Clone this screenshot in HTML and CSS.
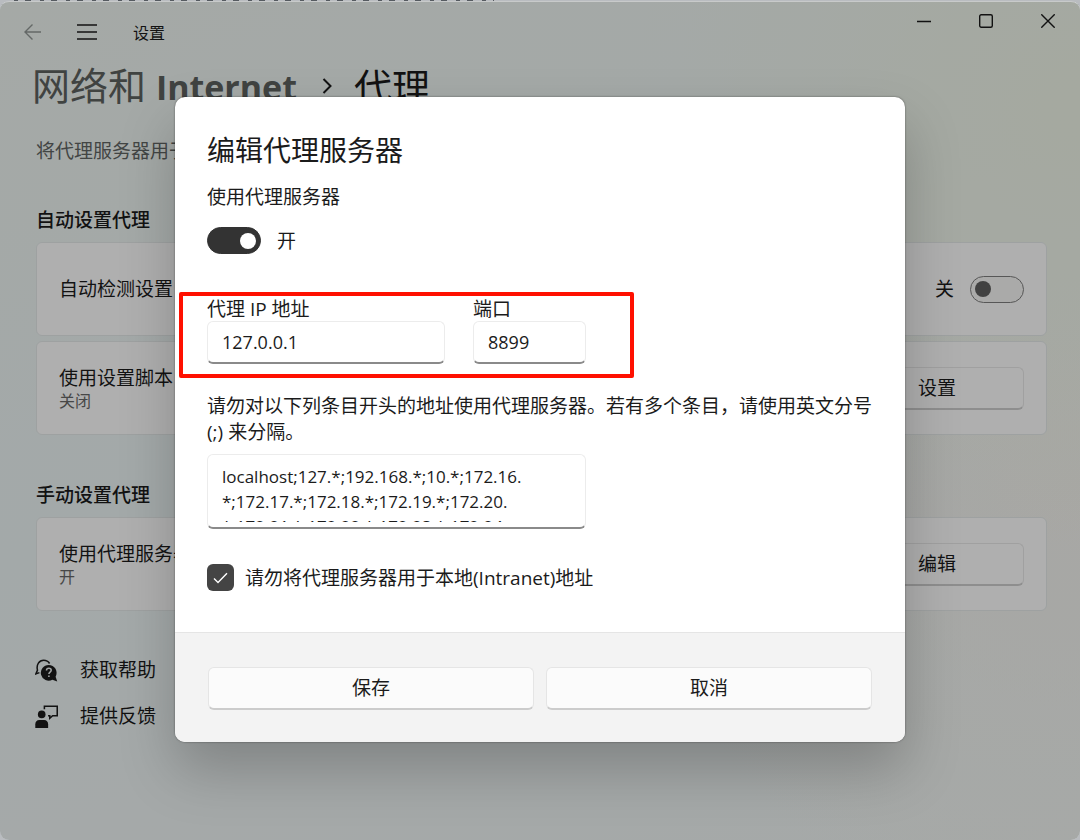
FILE: index.html
```html
<!DOCTYPE html>
<html lang="zh-CN">
<head>
    <meta charset="UTF-8">
    <meta name="viewport" content="width=device-width, initial-scale=1.0">
    <title>设置</title>
    <link rel="stylesheet" href="styles.css">
</head>
<body>
    <div class="window">
        <header class="titlebar">
            <button type="button" class="nav-button nav-back" aria-label="返回">
                <svg width="20" height="20" viewBox="0 0 20 20"><path d="M18 10H2M9.500 2.500L2 10l7.500 7.500"/></svg>
            </button>
            <button type="button" class="nav-button" aria-label="菜单">
                <svg width="20" height="20" viewBox="0 0 20 20"><path d="M0 3h20M0 10h20M0 17h20"/></svg>
            </button>
            <span class="app-name">设置</span>
            <div class="caption">
                <button type="button" aria-label="最小化">
                    <svg width="14" height="14" viewBox="0 0 14 14"><path d="M0 7.500h14"/></svg>
                </button>
                <button type="button" aria-label="最大化">
                    <svg width="14" height="14" viewBox="0 0 14 14"><rect x=".7" y=".7" width="12.600" height="12.600" rx="1.500"/></svg>
                </button>
                <button type="button" aria-label="关闭">
                    <svg width="14" height="14" viewBox="0 0 14 14"><path d="M.3 .3l13.400 13.400M13.700 .3L.3 13.700"/></svg>
                </button>
            </div>
        </header>

        <main class="page">
            <h1>
                <a href="#">网络和 <b>Internet</b></a>
                <svg width="10" height="16" viewBox="0 0 10 16"><path d="M1.500 1l7 7-7 7"/></svg>
                <span>代理</span>
            </h1>
            <p class="intro">将代理服务器用于</p>

            <h2>自动设置代理</h2>
            <div class="card">
                <label for="auto_detect">自动检测设置</label>
                <div class="card-action">
                    <span>关</span>
                    <input type="checkbox" class="toggle" id="auto_detect">
                </div>
            </div>
            <div class="card">
                <div>
                    <div>使用设置脚本</div>
                    <div class="state">关闭</div>
                </div>
                <button type="button" class="button">设置</button>
            </div>

            <h2 class="manual">手动设置代理</h2>
            <div class="card">
                <div>
                    <div>使用代理服务器</div>
                    <div class="state">开</div>
                </div>
                <button type="button" class="button">编辑</button>
            </div>

            <nav class="links">
                <a href="#">
                    <svg width="23" height="23" viewBox="0 0 24 24">
                        <path class="line" d="M4.600 14.200L.9 15.600l1.700-4C1.100 5.800 4.500 1.300 9 1.300c2.900 0 5 1.300 6.200 3.400"/>
                        <path d="M14.300 6.200a8.200 8.200 0 1 0 3.900 15.400l5 1.800-1.700-5A8.200 8.200 0 0 0 14.300 6.200z"/>
                        <path class="mark" d="M12 12c0-3.200 4.900-3 4.900-.2 0 1.900-2.400 1.900-2.400 3.900M14.500 17.200v1.600"/>
                    </svg>
                    获取帮助
                </a>
                <a href="#">
                    <svg width="23" height="23" viewBox="0 0 24 24">
                        <circle cx="7" cy="9.800" r="4"/>
                        <path d="M.3 24v-4c0-2.700 1.600-4.400 4.200-4.400h5c2.600 0 4.200 1.700 4.200 4.400v4z"/>
                        <path class="line" d="M9.800 4.400V1.200h13.400v10h-4.800l-3 2.600v-2.600h-1.800"/>
                    </svg>
                    提供反馈
                </a>
            </nav>
        </main>

        <div class="overlay">
            <form class="dialog" role="dialog" aria-labelledby="dialog_title" onsubmit="event.preventDefault();">
                <div class="dialog-body">
                    <h3 id="dialog_title">编辑代理服务器</h3>
                    <label for="use_proxy">使用代理服务器</label>
                    <div class="switch-row">
                        <input type="checkbox" class="toggle" id="use_proxy" checked>
                        <span>开</span>
                    </div>

                    <div class="address">
                        <div class="field">
                            <label for="proxy_ip">代理 IP 地址</label>
                            <input type="text" id="proxy_ip" name="proxy_ip" value="127.0.0.1">
                        </div>
                        <div class="field field-port">
                            <label for="proxy_port">端口</label>
                            <input type="text" id="proxy_port" name="proxy_port" value="8899">
                        </div>
                    </div>

                    <label class="exceptions-label" for="exceptions">请勿对以下列条目开头的地址使用代理服务器。若有多个条目，请使用英文分号 (;) 来分隔。</label>
                    <div class="exceptions">
                        <textarea id="exceptions" name="exceptions">localhost;127.*;192.168.*;10.*;172.16.
*;172.17.*;172.18.*;172.19.*;172.20.
*;172.21.*;172.22.*;172.23.*;172.24.</textarea>
                    </div>

                    <div class="check-row">
                        <span class="check">
                            <input type="checkbox" id="bypass_local" name="bypass_local" checked>
                            <svg width="15" height="12" viewBox="0 0 15 12"><path d="M1 6.500l4 4L14 1.300"/></svg>
                        </span>
                        <label for="bypass_local">请勿将代理服务器用于本地(Intranet)地址</label>
                    </div>
                </div>
                <div class="dialog-footer">
                    <button type="submit" class="button">保存</button>
                    <button type="button" class="button">取消</button>
                </div>
            </form>
        </div>
    </div>
</body>
</html>
```
FILE: styles.css
```css
* {
    box-sizing: border-box;
}
body {
    margin: 0;
    padding-top: 1px;
    background: #b9bcc0;
    color: #1b1b1b;
    font-family: "Open Sans", "Noto Sans CJK SC", sans-serif;
    font-size: 19px;
    line-height: 26px;
}
/* sliver of the window behind */
body::before {
    content: "";
    position: absolute;
    top: 0;
    left: 14px;
    width: 480px;
    height: 2px;
    background: repeating-linear-gradient(90deg, #555a60 0 4px, transparent 4px 11px, #555a60 11px 17px, transparent 17px 26px);
}
h1, h2, h3, p {
    margin: 0;
    font-weight: normal;
}
a {
    color: inherit;
    text-decoration: none;
}
button, input, textarea {
    font: inherit;
    color: inherit;
}
svg {
    flex: none;
    fill: none;
    stroke: currentColor;
    stroke-width: 1.4;
}

/* window */
.window {
    position: relative;
    min-height: calc(100vh - 1px);
    border-top: 1px solid #c8caca;
    border-radius: 9px;
    overflow: hidden;
    background:
        radial-gradient(circle at 100% 12%, #ecf3e5, transparent 34%),
        radial-gradient(circle at 100% 58%, #f1f0eb, transparent 38%),
        linear-gradient(165deg, #ecf3ee, #eaf2f3 50%, #eef3f1);
}
.titlebar {
    display: flex;
    align-items: flex-start;
    height: 58px;
    padding-left: 6px;
}
.nav-button {
    display: flex;
    align-items: center;
    justify-content: center;
    width: 54px;
    height: 60px;
    padding: 0;
    border: 0;
    background: none;
}
.nav-back {
    color: #909694;
}
.app-name {
    margin-left: 19px;
    font-size: 16px;
    line-height: 62px;
}
.caption {
    display: flex;
    margin: 0 1px 0 auto;
}
.caption button {
    display: flex;
    align-items: center;
    justify-content: center;
    width: 62px;
    height: 38px;
    padding: 0;
    border: 0;
    background: none;
}

/* settings page */
.page {
    padding: 0 33px 60px 36px;
}
h1 {
    display: flex;
    align-items: center;
    margin-left: -4px;
    font-size: 38px;
    line-height: 50px;
}
h1 a {
    color: #5c605e;
}
h1 b {
    font-weight: 700;
    font-size: 34px;
}
h1 svg {
    margin: 0 22px 0 25px;
    stroke-width: 2;
}
.intro {
    margin-top: 26px;
    color: #5f6362;
}
h2 {
    margin: 43px 0 9px;
    font-size: 19px;
    font-weight: 500;
}
h2.manual {
    margin-top: 47px;
}
.card {
    display: flex;
    align-items: center;
    justify-content: space-between;
    min-height: 94px;
    margin-bottom: 5px;
    padding: 0 22px;
    border: 1px solid #e2e7e7;
    border-radius: 6px;
    background: #fbfbfb;
}
.card-action {
    display: flex;
    align-items: center;
    gap: 16px;
}
.card .button {
    width: 174px;
}
.state {
    color: #666;
    font-size: 16px;
    line-height: 20px;
}
.button {
    height: 43px;
    padding: 0;
    border: 1px solid #e5e5e5;
    border-bottom: 2px solid #ccc;
    border-radius: 6px;
    background: #fbfbfb;
}
.links {
    margin-top: 36px;
}
.links a {
    display: flex;
    align-items: center;
    gap: 22px;
    margin-left: -1px;
    line-height: 46px;
}
.links svg {
    fill: currentColor;
    stroke: none;
}
.links .line {
    fill: none;
    stroke: currentColor;
    stroke-width: 1.6;
}
.links .mark {
    fill: none;
    stroke: #e8eded;
    stroke-width: 1.6;
}

/* toggle switch */
.toggle {
    appearance: none;
    display: flex;
    align-items: center;
    width: 54px;
    height: 27px;
    margin: 0;
    padding: 0 4px;
    border: 1px solid #7d7d7d;
    border-radius: 14px;
    background: #f4f4f2;
}
.toggle::before {
    content: "";
    width: 16px;
    height: 16px;
    border-radius: 50%;
    background: #5e5e5e;
}
.toggle:checked {
    justify-content: flex-end;
    border-color: #333;
    background: #333;
}
.toggle:checked::before {
    background: #fff;
}

/* dialog */
.overlay {
    position: absolute;
    inset: 0;
    display: flex;
    align-items: center;
    justify-content: center;
    padding-bottom: 3px;
    background: rgba(0, 0, 0, 0.3);
}
.dialog {
    width: 730px;
    max-width: calc(100% - 40px);
    border-radius: 10px;
    background: #fff;
    box-shadow: 0 0 2px rgba(0, 0, 0, 0.5), 0 28px 56px rgba(0, 0, 0, 0.22);
}
.dialog-body {
    padding: 34px 32px 41px;
}
h3 {
    margin-bottom: 15px;
    font-size: 28px;
    line-height: 38px;
}
.switch-row {
    display: flex;
    align-items: center;
    gap: 16px;
    height: 27px;
    margin: 17px 0 43px;
}
.address {
    position: relative;
    display: flex;
    gap: 28px;
    width: 427px;
    max-width: 100%;
    margin-bottom: 29px;
}
/* red highlight around the address fields */
.address::after {
    content: "";
    position: absolute;
    inset: -5px 0 -14px -28px;
    border: 4px solid #ff1000;
    border-radius: 2px;
    pointer-events: none;
}
.field {
    width: 238px;
}
.field-port {
    width: 113px;
}
.field label {
    display: block;
    line-height: 24px;
}
.field input {
    display: block;
    width: 100%;
    height: 43px;
    padding: 0 14px;
    border: 1px solid #ececec;
    border-bottom: 2px solid #8a8a8a;
    border-radius: 6px;
    background: #fff;
    font-size: 18px;
}
.exceptions-label {
    display: block;
    margin-bottom: 9px;
}
.exceptions {
    width: 379px;
    max-width: 100%;
    height: 75px;
    padding: 9px 14px 5px;
    border: 1px solid #ececec;
    border-bottom: 2px solid #8a8a8a;
    border-radius: 6px;
}
.exceptions textarea {
    display: block;
    width: 100%;
    height: 100%;
    padding: 0;
    border: 0;
    outline: 0;
    resize: none;
    overflow: hidden;
    background: none;
    font-size: 17px;
    line-height: 25px;
}
.check-row {
    display: flex;
    align-items: center;
    gap: 11px;
    height: 27px;
    margin-top: 35px;
}
.check {
    display: grid;
    place-items: center;
}
.check input,
.check svg {
    grid-area: 1 / 1;
}
.check input {
    appearance: none;
    width: 27px;
    height: 27px;
    margin: 0;
    border-radius: 6px;
    background: #444;
}
.check svg {
    color: #fff;
    pointer-events: none;
}
.dialog-footer {
    display: flex;
    gap: 12px;
    padding: 34px 33px 32px;
    border-top: 1px solid #e5e5e5;
    border-radius: 0 0 10px 10px;
    background: #f3f3f3;
}
.dialog-footer .button {
    flex: 1;
}
```
